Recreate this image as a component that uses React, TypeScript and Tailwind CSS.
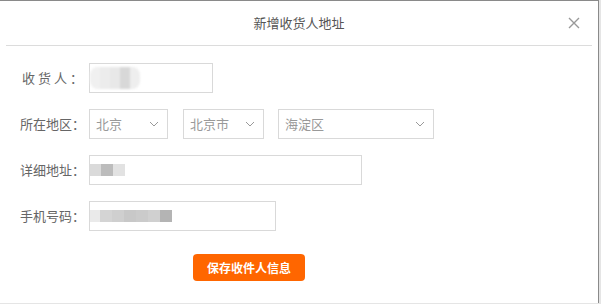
const font = { fontFamily: '"Noto Sans CJK SC", "Liberation Sans", sans-serif' };

function Chevron() {
  return (
    <svg width="10" height="6" viewBox="0 0 10 6" className="text-[#999]">
      <path d="M1 1l4 4 4-4" fill="none" stroke="currentColor" strokeWidth="1" />
    </svg>
  );
}

function Select({ value, w }: { value: string; w: string }) {
  return (
    <div className={`flex h-[30px] ${w} items-center justify-between border border-[#d9d9d9] pl-[6px] pr-[8px] text-[13px] text-[#999]`}>
      <span>{value}</span>
      <Chevron />
    </div>
  );
}

function Cell({ w, c }: { w: string; c: string }) {
  return <div className={`${w} h-full ${c}`} />;
}

export default function App() {
  return (
    <div className="h-[304px] w-[601px] bg-[#e5e5e5]" style={font}>
      <div className="h-[303px] w-[599px] border-t border-r border-[#8a8a8a] bg-white">
        <div className="relative flex h-[44px] items-center justify-center text-[13px] text-[#555]">
          新增收货人地址
          <svg className="absolute right-[18px] top-[16px]" width="12" height="12" viewBox="0 0 12 12">
            <path d="M1 1l10 10M11 1L1 11" stroke="#999" strokeWidth="1.4" />
          </svg>
        </div>
        <div className="mx-[6px] h-px bg-[#dcdcdc]" />

        <div className="flex flex-col gap-[16px] pt-[17px] text-[13px] text-[#666]">
          <div className="flex items-center">
            <span className="w-[89px] pl-[22px] tracking-[3px]">收货人：</span>
            <div className="flex h-[30px] w-[124px] items-center border border-[#d9d9d9]">
              <div className="flex h-[22px] overflow-hidden rounded-[8px] blur-[1px]">
                <Cell w="w-[10px]" c="bg-[#f0f0f0]" />
                <Cell w="w-[10px]" c="bg-[#ececec]" />
                <Cell w="w-[10px]" c="bg-[#e8e8e8]" />
                <Cell w="w-[10px]" c="bg-[#d8d8d8]" />
                <Cell w="w-[10px]" c="bg-[#eeeeee]" />
              </div>
            </div>
          </div>

          <div className="flex items-center">
            <span className="w-[89px] pl-[20px]">所在地区：</span>
            <Select value="北京" w="w-[79px]" />
            <div className="w-[15px]" />
            <Select value="北京市" w="w-[81px]" />
            <div className="w-[14px]" />
            <Select value="海淀区" w="w-[156px]" />
          </div>

          <div className="flex items-center">
            <span className="w-[89px] pl-[20px]">详细地址：</span>
            <div className="flex h-[30px] w-[273px] items-center border border-[#d9d9d9]">
              <div className="flex h-[12px]">
                <Cell w="w-[11px]" c="bg-[#dadada]" />
                <Cell w="w-[12px]" c="bg-[#bcbcbc]" />
                <Cell w="w-[12px]" c="bg-[#e2e2e2]" />
              </div>
            </div>
          </div>

          <div className="flex items-center">
            <span className="w-[89px] pl-[20px]">手机号码：</span>
            <div className="flex h-[30px] w-[187px] items-center border border-[#d9d9d9]">
              <div className="flex h-[12px]">
                <Cell w="w-[10px]" c="bg-[#eaeaea]" />
                <Cell w="w-[12px]" c="bg-[#d4d4d4]" />
                <Cell w="w-[12px]" c="bg-[#cfcfcf]" />
                <Cell w="w-[12px]" c="bg-[#c8c8c8]" />
                <Cell w="w-[12px]" c="bg-[#cbcbcb]" />
                <Cell w="w-[12px]" c="bg-[#d0d0d0]" />
                <Cell w="w-[12px]" c="bg-[#b4b4b4]" />
              </div>
            </div>
          </div>

          <div className="flex pl-[193px] pt-[7px]">
            <button className="h-[27px] w-[112px] rounded-sm bg-[#ff6600] text-[12px] font-bold text-white">
              保存收件人信息
            </button>
          </div>
        </div>
      </div>
    </div>
  );
}
